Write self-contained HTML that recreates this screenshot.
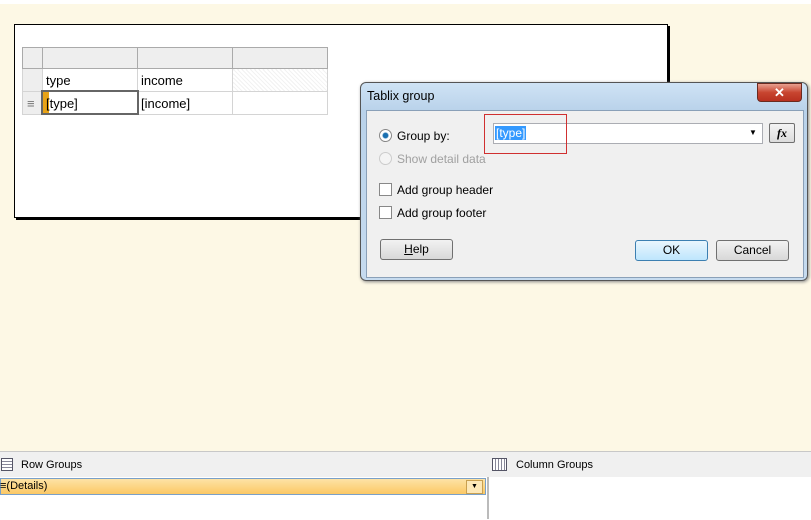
<html><head><style>
body{margin:0;width:811px;height:519px;overflow:hidden;background:#fdf8e5;font-family:"Liberation Sans",sans-serif;position:relative}
.a{position:absolute}
.t{font-size:12px;color:#000}
table{border-collapse:collapse}
td{border:1px solid #d4d4d4;padding:0 0 0 3px;font-size:13px;height:22px;box-sizing:border-box;position:relative;z-index:2}
</style></head><body>
<div class="a" style="left:0;top:0;width:811px;height:4px;background:#fff"></div>
<div class="a" style="left:14px;top:24px;width:652px;height:192px;background:#fff;border:1px solid #000;box-shadow:2px 2px 0 #000"></div>
<div class="a" style="left:43px;top:92px;width:6px;height:21px;background:#e8a317;z-index:1"></div>
<table class="a" style="left:22px;top:47px">
<tr style="background:#eee"><td style="width:20px;background:#eee;border-color:#aaa;height:21px"></td><td style="width:95px;border-color:#aaa;height:21px"></td><td style="width:95px;border-color:#aaa;height:21px"></td><td style="width:95px;border-color:#aaa;height:21px"></td></tr>
<tr><td style="background:#eee;height:23px"></td><td style="height:23px">type</td><td style="height:23px">income</td><td style="height:23px;background:repeating-linear-gradient(45deg,#f2f2f2 0 1px,#fff 1px 3px)"></td></tr>
<tr><td style="background:#eee;color:#777;padding-left:4px;height:23px">≡</td><td style="height:23px;background:transparent">[type]</td><td style="height:23px">[income]</td><td style="height:23px"></td></tr>
</table>
<div class="a" style="left:41px;top:90px;width:94px;height:21px;border:2px solid #666;z-index:3"></div>

<div class="a" style="left:360px;top:82px;width:446px;height:197px;border:1px solid #555;border-radius:6px;background:linear-gradient(#cfe3f5,#b9d2ea 28px,#c6dbef);box-shadow:1px 1px 3px #888"></div>
<div class="a t" style="left:367px;top:89px;font-size:12.5px">Tablix group</div>
<div class="a" style="left:757px;top:83px;width:43px;height:17px;border-radius:0 0 4px 4px;background:linear-gradient(#e8a090,#c84530 50%,#b83020);border:1px solid #6a2a20;color:#fff;text-align:center;font-weight:bold;font-size:13px;line-height:17px">✕</div>
<div class="a" style="left:366px;top:110px;width:436px;height:166px;background:#f0f0f0;border:1px solid #8aa0b8"></div>
<div class="a" style="left:379px;top:129px;width:11px;height:11px;border:1px solid #888;border-radius:50%;background:radial-gradient(#1a6fb0 30%,#fff 45%)"></div>
<div class="a t" style="left:397px;top:129px">Group by:</div>
<div class="a" style="left:379px;top:152px;width:11px;height:11px;border:1px solid #ccc;border-radius:50%;background:#f4f4f4"></div>
<div class="a t" style="left:397px;top:152px;color:#a0a0a0">Show detail data</div>
<div class="a" style="left:379px;top:183px;width:11px;height:11px;border:1px solid #888;background:#fff"></div>
<div class="a t" style="left:397px;top:183px">Add group header</div>
<div class="a" style="left:379px;top:206px;width:11px;height:11px;border:1px solid #888;background:#fff"></div>
<div class="a t" style="left:397px;top:206px">Add group footer</div>
<div class="a" style="left:493px;top:123px;width:268px;height:19px;border:1px solid #abadb3;background:#fff"></div>
<div class="a" style="left:495px;top:126px;height:14px;background:#3399ff;color:#fff;font-size:12px;line-height:14px;padding:0 1px">[type]</div>
<div class="a" style="left:749px;top:128px;font-size:8px">▼</div>
<div class="a" style="left:484px;top:114px;width:81px;height:38px;border:1px solid #d03030"></div>
<div class="a" style="left:769px;top:123px;width:24px;height:18px;border:1px solid #707070;border-radius:2px;background:linear-gradient(#f4f4f4,#dcdcdc);font-family:'Liberation Serif';font-style:italic;font-weight:bold;font-size:12px;text-align:center;line-height:18px">fx</div>
<div class="a t" style="left:380px;top:239px;width:71px;height:19px;border:1px solid #707070;border-radius:3px;background:linear-gradient(#f2f2f2,#d8d8d8);text-align:center;line-height:19px"><u>H</u>elp</div>
<div class="a t" style="left:635px;top:240px;width:71px;height:19px;border:1px solid #3c7fb1;border-radius:3px;background:linear-gradient(#eaf6fd,#bee6fd);text-align:center;line-height:19px">OK</div>
<div class="a t" style="left:716px;top:240px;width:71px;height:19px;border:1px solid #707070;border-radius:3px;background:linear-gradient(#f2f2f2,#d8d8d8);text-align:center;line-height:19px">Cancel</div>

<div class="a" style="left:0;top:451px;width:811px;height:68px;background:#fff;border-top:1px solid #c8c8c8"></div>
<div class="a" style="left:0;top:452px;width:811px;height:25px;background:#f0f0f0"></div>
<div class="a" style="left:1px;top:458px;width:10px;height:11px;border:1px solid #556;background:repeating-linear-gradient(#fff 0 2px,#889 2px 3px)"></div>
<div class="a" style="left:21px;top:459px;font-size:11px">Row Groups</div>
<div class="a" style="left:492px;top:458px;width:13px;height:11px;border:1px solid #556;background:repeating-linear-gradient(90deg,#fff 0 2px,#889 2px 3px)"></div>
<div class="a" style="left:516px;top:459px;font-size:11px">Column Groups</div>
<div class="a" style="left:0;top:478px;width:484px;height:15px;border:1px solid #7aa0c8;background:linear-gradient(#fde3a6,#fbc865)"></div>
<div class="a" style="left:0;top:480px;font-size:11px">≡(Details)</div>
<div class="a" style="left:466px;top:480px;width:15px;height:12px;background:#fde8b8;border:1px solid #c9a050;font-size:7px;text-align:center;line-height:12px">▼</div>
<div class="a" style="left:487px;top:477px;width:2px;height:42px;background:#bbb"></div>
</body></html>
